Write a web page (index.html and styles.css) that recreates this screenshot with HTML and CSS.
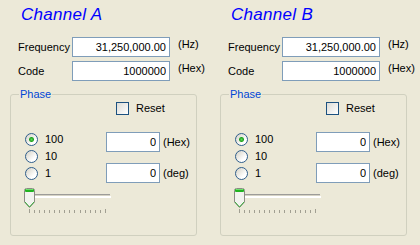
FILE: index.html
```html
<!DOCTYPE html>
<html lang="en">

<head>
    <meta charset="UTF-8">
    <meta name="viewport" content="width=device-width, initial-scale=1.0">
    <title>Channels</title>
    <link rel="stylesheet" href="styles.css">
</head>

<body>
    <div class="channels">
        <div class="channel">
            <h2 class="channel-title">Channel A</h2>
            <div class="field-row">
                <label for="freqA">Frequency</label>
                <input type="text" id="freqA" value="31,250,000.00">
                <span class="unit">(Hz)</span>
            </div>
            <div class="field-row">
                <label for="codeA">Code</label>
                <input type="text" id="codeA" value="1000000">
                <span class="unit">(Hex)</span>
            </div>
            <fieldset class="phase">
                <legend>Phase</legend>
                <label class="reset"><input type="checkbox" class="xp-check"> Reset</label>
                <div class="phase-body">
                    <div class="steps">
                        <label class="step"><input type="radio" name="stepA" class="xp-radio" checked> 100</label>
                        <label class="step"><input type="radio" name="stepA" class="xp-radio"> 10</label>
                        <label class="step"><input type="radio" name="stepA" class="xp-radio"> 1</label>
                    </div>
                    <div class="phase-values">
                        <div class="value-row"><input type="text" value="0"><span class="unit">(Hex)</span></div>
                        <div class="value-row"><input type="text" value="0"><span class="unit">(deg)</span></div>
                    </div>
                </div>
                <svg class="slider" width="88" height="26" viewBox="0 0 88 26">
                    <rect x="11" y="6" width="75" height="1" fill="#9d9c99"/>
                    <rect x="11" y="7" width="75" height="1" fill="#d6d3c4"/>
                    <rect x="11" y="8" width="76" height="2" fill="#ffffff"/>
                    <path d="M0.5 2.5 Q0.5 0.5 2.5 0.5 H8.5 Q10.5 0.5 10.5 2.5 V14 L5.5 19.5 L0.5 14 Z" fill="#f3f3ef" stroke="#8c8c84"/>
                    <path d="M1 14 L5.5 19 L10 14" fill="none" stroke="#3cae3c"/>
                    <rect x="1" y="1" width="9" height="3" rx="1" fill="#21b321"/>
                    <rect x="2" y="1" width="7" height="1" fill="#6fe06f"/>
                    <g fill="#a19f92">
                        <rect x="5" y="21" width="1" height="4"/>
                        <rect x="10" y="22" width="1" height="3"/>
                        <rect x="15" y="22" width="1" height="3"/>
                        <rect x="20" y="22" width="1" height="3"/>
                        <rect x="25" y="22" width="1" height="3"/>
                        <rect x="30" y="22" width="1" height="3"/>
                        <rect x="35" y="22" width="1" height="3"/>
                        <rect x="40" y="22" width="1" height="3"/>
                        <rect x="45" y="22" width="1" height="3"/>
                        <rect x="50" y="22" width="1" height="3"/>
                        <rect x="56" y="22" width="1" height="3"/>
                        <rect x="61" y="22" width="1" height="3"/>
                        <rect x="66" y="22" width="1" height="3"/>
                        <rect x="71" y="22" width="1" height="3"/>
                        <rect x="76" y="22" width="1" height="3"/>
                        <rect x="81" y="21" width="1" height="4"/>
                    </g>
                </svg>
            </fieldset>
        </div>

        <div class="channel">
            <h2 class="channel-title">Channel B</h2>
            <div class="field-row">
                <label for="freqB">Frequency</label>
                <input type="text" id="freqB" value="31,250,000.00">
                <span class="unit">(Hz)</span>
            </div>
            <div class="field-row">
                <label for="codeB">Code</label>
                <input type="text" id="codeB" value="1000000">
                <span class="unit">(Hex)</span>
            </div>
            <fieldset class="phase">
                <legend>Phase</legend>
                <label class="reset"><input type="checkbox" class="xp-check"> Reset</label>
                <div class="phase-body">
                    <div class="steps">
                        <label class="step"><input type="radio" name="stepB" class="xp-radio" checked> 100</label>
                        <label class="step"><input type="radio" name="stepB" class="xp-radio"> 10</label>
                        <label class="step"><input type="radio" name="stepB" class="xp-radio"> 1</label>
                    </div>
                    <div class="phase-values">
                        <div class="value-row"><input type="text" value="0"><span class="unit">(Hex)</span></div>
                        <div class="value-row"><input type="text" value="0"><span class="unit">(deg)</span></div>
                    </div>
                </div>
                <svg class="slider" width="88" height="26" viewBox="0 0 88 26">
                    <rect x="11" y="6" width="75" height="1" fill="#9d9c99"/>
                    <rect x="11" y="7" width="75" height="1" fill="#d6d3c4"/>
                    <rect x="11" y="8" width="76" height="2" fill="#ffffff"/>
                    <path d="M0.5 2.5 Q0.5 0.5 2.5 0.5 H8.5 Q10.5 0.5 10.5 2.5 V14 L5.5 19.5 L0.5 14 Z" fill="#f3f3ef" stroke="#8c8c84"/>
                    <path d="M1 14 L5.5 19 L10 14" fill="none" stroke="#3cae3c"/>
                    <rect x="1" y="1" width="9" height="3" rx="1" fill="#21b321"/>
                    <rect x="2" y="1" width="7" height="1" fill="#6fe06f"/>
                    <g fill="#a19f92">
                        <rect x="5" y="21" width="1" height="4"/>
                        <rect x="10" y="22" width="1" height="3"/>
                        <rect x="15" y="22" width="1" height="3"/>
                        <rect x="20" y="22" width="1" height="3"/>
                        <rect x="25" y="22" width="1" height="3"/>
                        <rect x="30" y="22" width="1" height="3"/>
                        <rect x="35" y="22" width="1" height="3"/>
                        <rect x="40" y="22" width="1" height="3"/>
                        <rect x="45" y="22" width="1" height="3"/>
                        <rect x="50" y="22" width="1" height="3"/>
                        <rect x="56" y="22" width="1" height="3"/>
                        <rect x="61" y="22" width="1" height="3"/>
                        <rect x="66" y="22" width="1" height="3"/>
                        <rect x="71" y="22" width="1" height="3"/>
                        <rect x="76" y="22" width="1" height="3"/>
                        <rect x="81" y="21" width="1" height="4"/>
                    </g>
                </svg>
            </fieldset>
        </div>
    </div>
</body>

</html>
```
FILE: styles.css
```css
body {
    margin: 0;
    background-color: #ece9d8;
    font-family: "Liberation Sans", Arial, sans-serif;
    font-size: 11px;
    color: #000;
}

.channels {
    display: flex;
}

.channel {
    width: 210px;
}

.channel-title {
    margin: 5px 0 0 21px;
    height: 19px;
    font-size: 17px;
    line-height: 19px;
    font-style: italic;
    font-weight: normal;
    letter-spacing: 0.3px;
    color: #0000ff;
}

.field-row {
    display: grid;
    grid-template-columns: 54px 98px auto;
    height: 20px;
    margin-left: 18px;
    line-height: 13px;
}

.field-row:first-of-type {
    margin-top: 13px;
}

.field-row + .field-row {
    margin-top: 4px;
}

.field-row label {
    padding-top: 4px;
}

.field-row .unit {
    margin-left: 8px;
}

input[type="text"] {
    box-sizing: border-box;
    height: 20px;
    margin: 0;
    padding: 0 3px 0 2px;
    border: 1px solid #7f9db9;
    background: #fff;
    font-family: "Liberation Sans", Arial, sans-serif;
    font-size: 11px;
    text-align: right;
    color: #000;
}

.field-row input {
    width: 98px;
}

.unit {
    padding-top: 1px;
}

.phase {
    box-sizing: border-box;
    width: 187px;
    height: 148px;
    margin: 7px 0 0 10px;
    padding: 0;
    border: 1px solid #d0d0bf;
    border-radius: 3px;
    line-height: 13px;
}

.phase legend {
    margin-left: 8px;
    padding: 0 1px;
    color: #0046d5;
    line-height: 13px;
}

.reset {
    display: flex;
    align-items: center;
    gap: 7px;
    margin: 1px 0 0 105px;
    width: max-content;
}

.xp-check,
.xp-radio {
    appearance: none;
    -webkit-appearance: none;
    box-sizing: border-box;
    width: 13px;
    height: 13px;
    margin: 0;
    border: 1px solid #1c5180;
    background: linear-gradient(135deg, #dcdcd7, #ffffff);
}

.xp-radio {
    border-color: #2f5e8c;
    border-radius: 50%;
    background: linear-gradient(135deg, #d4d1c4, #ffffff 70%);
}

.xp-radio:checked {
    background: radial-gradient(circle, #5bd85b 0, #21a121 2px, transparent 3px),
        linear-gradient(135deg, #d4d1c4, #ffffff 70%);
}

.phase-body {
    display: flex;
    margin-top: 16px;
}

.steps {
    display: flex;
    flex-direction: column;
    margin-left: 14px;
    width: 81px;
}

.step {
    display: flex;
    align-items: center;
    gap: 7px;
    height: 17px;
}

.phase-values {
    display: flex;
    flex-direction: column;
    gap: 11px;
    margin-top: 1px;
}

.value-row {
    display: flex;
    gap: 3px;
}

.value-row input {
    width: 54px;
}

.value-row .unit {
    padding-top: 4px;
}

.slider {
    display: block;
    margin: 5px 0 0 13px;
}
```
